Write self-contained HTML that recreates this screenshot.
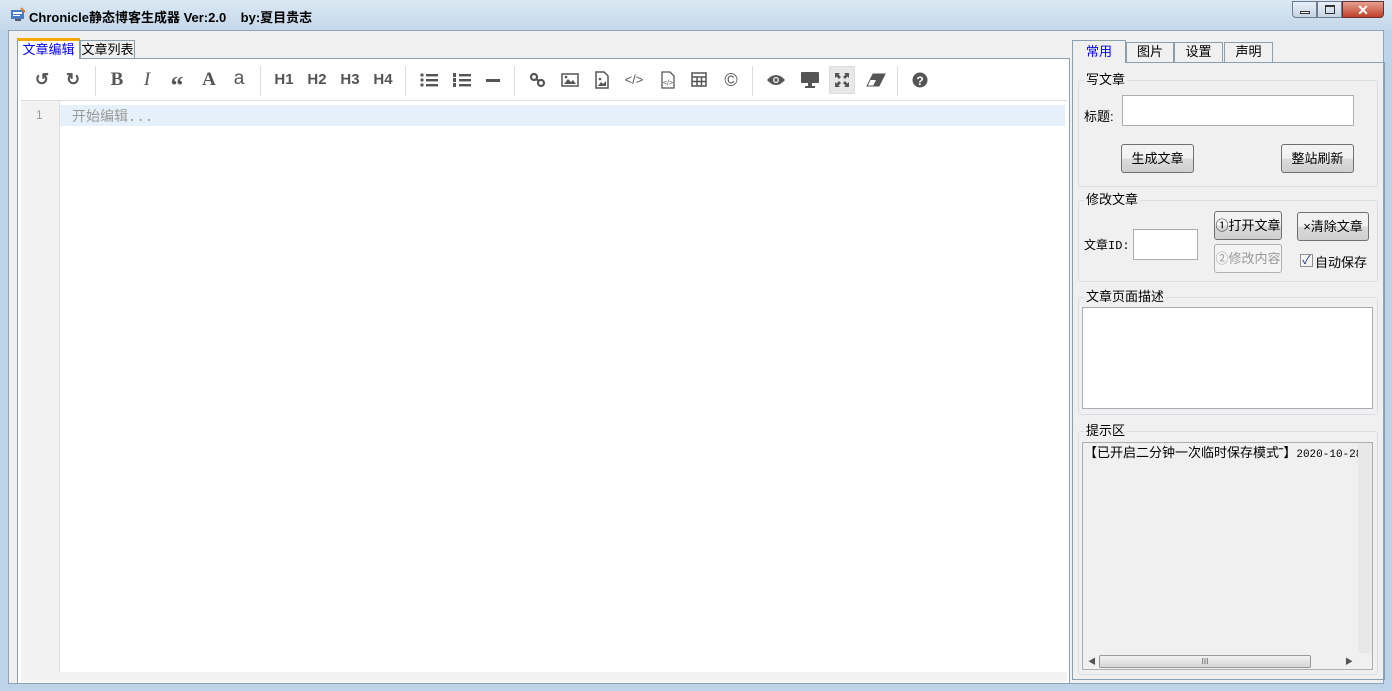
<!DOCTYPE html>
<html><head><meta charset="utf-8"><style>
*{margin:0;padding:0;box-sizing:border-box}
body{width:1392px;height:691px;overflow:hidden;background:#bcd3e8;font-family:"Liberation Sans","Noto Sans CJK SC",sans-serif;font-size:13px;position:relative;color:#000}
.abs{position:absolute}
#title{left:0;top:0;width:1392px;height:30px;background:linear-gradient(#dbe8f4,#c4d8ea)}
#client{left:8px;top:30px;width:1376px;height:654px;background:#f0f0f0;border:1px solid #8ea4bb}
.tab{position:absolute;border:1px solid #8c9fae;border-bottom:none;background:#f0f0f0;text-align:center;font-size:13px;line-height:18px}
.btn{position:absolute;border:1px solid #707070;border-radius:3px;background:linear-gradient(#f2f2f2 50%,#dcdcdc 50%,#cfcfcf);text-align:center;font-size:13px;line-height:27px}
.grp{position:absolute;border:1px solid #d5dfe5;border-radius:3px}
.lbl{position:absolute;background:#f0f0f0;padding:0 2px;font-size:13px;line-height:14px}
.inp{position:absolute;background:#fff;border:1px solid #abadb3}
.ic{position:absolute;top:71px;width:20px;height:18px;color:#555;font-weight:bold;text-align:center;font-size:17px;line-height:18px}
.sep{position:absolute;top:66px;width:1px;height:30px;background:#ddd}
</style></head><body>
<div id="title" class="abs"></div>
<svg class="abs" style="left:10px;top:7px" width="16" height="16"><rect x="1" y="3" width="13" height="9" fill="#4a7cc4"/><rect x="3" y="5" width="9" height="2" fill="#fff"/><rect x="3" y="8" width="7" height="1" fill="#fff"/><rect x="5" y="12" width="6" height="2" fill="#556"/><line x1="11" y1="1" x2="15" y2="5" stroke="#e08020" stroke-width="2"/></svg>
<div class="abs" style="left:29px;top:7px;font-weight:bold;font-size:13px">Chronicle静态博客生成器 Ver:2.0&nbsp;&nbsp;&nbsp; by:夏目贵志</div>
<div class="abs" style="left:1292px;top:1px;width:25px;height:17px;border:1px solid #6a7d92;border-radius:0 0 0 4px;background:linear-gradient(#e8eff7,#c6d4e3)"><div style="margin:9px 7px;width:10px;height:3px;border:1px solid #333;background:#fff"></div></div>
<div class="abs" style="left:1317px;top:1px;width:25px;height:17px;border:1px solid #6a7d92;background:linear-gradient(#e8eff7,#c6d4e3)"><div style="margin:3px 7px;width:10px;height:9px;border:1px solid #333;border-top-width:2px"></div></div>
<div class="abs" style="left:1342px;top:1px;width:42px;height:17px;border:1px solid #6a3030;border-radius:0 0 4px 0;background:linear-gradient(#e8a090,#c0402c);color:#fff;text-align:center;font-weight:bold;font-size:14px;line-height:16px">✕</div>
<div id="client" class="abs"></div>

<div class="tab" style="left:17px;top:38px;width:63px;height:21px;background:#fff;border-top:3px solid #f6a800;color:#00f;line-height:17px;z-index:2">文章编辑</div>
<div class="tab" style="left:80px;top:40px;width:55px;height:19px">文章列表</div>
<div class="abs" style="left:17px;top:58px;width:1053px;height:626px;border:1px solid #8c9fae;background:#fff"></div>
<div class="abs" style="left:21px;top:60px;width:1046px;height:41px;background:#fff;border-bottom:1px solid #ddd"></div>
<div class="abs" style="left:21px;top:101px;width:39px;height:572px;background:#f2f2f2;border-right:1px solid #ddd"></div>
<div class="abs" style="left:36px;top:108px;color:#999;font-size:12px">1</div>
<div class="abs" style="left:60px;top:105px;width:1005px;height:21px;background:#e6f0fb"></div>
<div class="abs" style="left:72px;top:106px;color:#999;font-size:14px;font-family:'Liberation Mono','Noto Sans CJK SC',monospace">开始编辑...</div>
<div class="abs" style="left:21px;top:672px;width:1046px;height:10px;background:#f2f2f2"></div>

<div class="ic" style="left:32px">↺</div>
<div class="ic" style="left:63px">↻</div>
<div class="sep" style="left:95px"></div>
<div class="ic" style="left:107px;font-family:'Liberation Serif',serif;font-size:19px">B</div>
<div class="ic" style="left:137px;font-family:'Liberation Serif',serif;font-style:italic;font-weight:normal;font-size:19px">I</div>
<div class="ic" style="left:167px;font-family:'Liberation Serif',serif;font-size:26px;line-height:30px">“</div>
<div class="ic" style="left:199px;font-family:'Liberation Serif',serif;font-size:19px">A</div>
<div class="ic" style="left:229px;font-weight:normal;font-size:19px;line-height:15px">a</div>
<div class="sep" style="left:260px"></div>
<div class="ic" style="left:272px;width:24px;font-size:15px">H1</div>
<div class="ic" style="left:305px;width:24px;font-size:15px">H2</div>
<div class="ic" style="left:338px;width:24px;font-size:15px">H3</div>
<div class="ic" style="left:371px;width:24px;font-size:15px">H4</div>
<div class="sep" style="left:405px"></div>
<svg class="abs" style="left:420px;top:72px" width="18" height="16" fill="#555"><circle cx="2" cy="3" r="1.6"/><circle cx="2" cy="8" r="1.6"/><circle cx="2" cy="13" r="1.6"/><rect x="6" y="2" width="12" height="2.4"/><rect x="6" y="7" width="12" height="2.4"/><rect x="6" y="12" width="12" height="2.4"/></svg>
<svg class="abs" style="left:453px;top:72px" width="18" height="16" fill="#555"><rect x="0" y="1" width="3" height="4"/><rect x="0" y="6" width="3" height="4"/><rect x="0" y="11" width="3" height="4"/><rect x="6" y="2" width="12" height="2.4"/><rect x="6" y="7" width="12" height="2.4"/><rect x="6" y="12" width="12" height="2.4"/></svg>
<div class="abs" style="left:486px;top:79px;width:14px;height:3px;background:#555"></div>
<div class="sep" style="left:514px"></div>
<svg class="abs" style="left:529px;top:72px" width="17" height="16" fill="none" stroke="#555" stroke-width="2.2"><circle cx="5" cy="5" r="3"/><circle cx="12" cy="11" r="3"/><line x1="7" y1="7" x2="10" y2="9"/></svg>
<svg class="abs" style="left:561px;top:72px" width="18" height="16"><rect x="1" y="2" width="16" height="12" fill="none" stroke="#555" stroke-width="1.5"/><path d="M3 12 L7 7 L10 10 L12 8 L15 12Z" fill="#555"/><circle cx="5" cy="5" r="1.3" fill="#555"/></svg>
<svg class="abs" style="left:594px;top:71px" width="16" height="18"><path d="M2 1H10L14 5V17H2Z" fill="none" stroke="#555" stroke-width="1.5"/><path d="M4 15L7 11L9 13L12 10V15Z" fill="#555"/><circle cx="6" cy="8" r="1.3" fill="#555"/></svg>
<div class="ic" style="left:624px;font-weight:normal;font-size:13px">&lt;/&gt;</div>
<svg class="abs" style="left:660px;top:71px" width="16" height="18"><path d="M2 1H10L14 5V17H2Z" fill="none" stroke="#555" stroke-width="1.3"/><text x="8" y="14" font-size="7" text-anchor="middle" fill="#555" font-family="Liberation Sans">&lt;/&gt;</text></svg>
<svg class="abs" style="left:691px;top:72px" width="16" height="15" fill="none" stroke="#555" stroke-width="1.5"><rect x="1" y="1" width="14" height="13"/><line x1="1" y1="5" x2="15" y2="5"/><line x1="1" y1="9.5" x2="15" y2="9.5"/><line x1="6" y1="5" x2="6" y2="14"/><line x1="10.5" y1="5" x2="10.5" y2="14"/></svg>
<div class="ic" style="left:721px;font-weight:normal;font-size:18px">©</div>
<div class="sep" style="left:752px"></div>
<svg class="abs" style="left:766px;top:73px" width="20" height="14"><path d="M1 7Q10 -3 19 7Q10 17 1 7Z" fill="#555"/><circle cx="10" cy="7" r="3" fill="#fff"/><circle cx="10" cy="7" r="1.8" fill="#555"/></svg>
<svg class="abs" style="left:800px;top:71px" width="20" height="17" fill="#555"><rect x="1" y="1" width="18" height="11" rx="1"/><rect x="8" y="12" width="4" height="3"/><rect x="5" y="15" width="10" height="2"/></svg>
<div class="abs" style="left:829px;top:66px;width:26px;height:28px;background:#e8e8e8;border:1px solid #ddd"></div>
<svg class="abs" style="left:834px;top:72px" width="16" height="16" fill="#555"><path d="M1 1H6L4.5 2.5 7 5 5 7 2.5 4.5 1 6Z M15 1V6L13.5 4.5 11 7 9 5 11.5 2.5 10 1Z M1 15V10L2.5 11.5 5 9 7 11 4.5 13.5 6 15Z M15 15H10L11.5 13.5 9 11 11 9 13.5 11.5 15 10Z"/></svg>
<svg class="abs" style="left:866px;top:73px" width="20" height="14"><path d="M7 1H19L13 13H1Z" fill="#555"/><path d="M4 7H10L7 13H1Z" fill="#fff"/><path d="M7 1H19L13 13H1Z" fill="none" stroke="#555"/></svg>
<div class="sep" style="left:897px"></div>
<svg class="abs" style="left:912px;top:72px" width="16" height="16"><circle cx="8" cy="8" r="7.5" fill="#555"/><text x="8" y="13" font-size="12" font-weight="bold" text-anchor="middle" fill="#fff" font-family="Liberation Sans">?</text></svg>

<div class="tab" style="left:1072px;top:40px;width:54px;height:23px;background:#f0f0f0;color:#00f;line-height:22px;z-index:2">常用</div>
<div class="tab" style="left:1126px;top:42px;width:48px;height:20px">图片</div>
<div class="tab" style="left:1174px;top:42px;width:49px;height:20px">设置</div>
<div class="tab" style="left:1224px;top:42px;width:49px;height:20px">声明</div>
<div class="abs" style="left:1072px;top:62px;width:313px;height:618px;border:1px solid #8c9fae"></div>

<div class="grp" style="left:1078px;top:80px;width:300px;height:107px"></div>
<div class="lbl" style="left:1084px;top:73px">写文章</div>
<div class="abs" style="left:1084px;top:106px">标题:</div>
<div class="inp" style="left:1122px;top:95px;width:232px;height:31px"></div>
<div class="btn" style="left:1121px;top:144px;width:73px;height:29px">生成文章</div>
<div class="btn" style="left:1281px;top:144px;width:73px;height:29px">整站刷新</div>

<div class="grp" style="left:1078px;top:200px;width:300px;height:82px"></div>
<div class="lbl" style="left:1084px;top:193px">修改文章</div>
<div class="abs" style="left:1084px;top:236px;font-family:'Liberation Mono','Noto Sans CJK SC',monospace;font-size:12px">文章ID:</div>
<div class="inp" style="left:1133px;top:229px;width:65px;height:31px"></div>
<div class="btn" style="left:1214px;top:211px;width:68px;height:29px">①打开文章</div>
<div class="btn" style="left:1297px;top:212px;width:72px;height:29px">×清除文章</div>
<div class="abs" style="left:1214px;top:244px;width:68px;height:29px;border:1px solid #adb2b5;border-radius:3px;background:#f4f4f4;color:#999;text-align:center;line-height:27px">②修改内容</div>
<div class="abs" style="left:1300px;top:254px;width:13px;height:13px;border:1px solid #8f8f8f;background:#f4f4f4;color:#22337a;font-size:12px;line-height:11px;text-align:center">✓</div>
<div class="abs" style="left:1315px;top:252px">自动保存</div>

<div class="grp" style="left:1078px;top:297px;width:300px;height:118px"></div>
<div class="lbl" style="left:1084px;top:290px">文章页面描述</div>
<div class="inp" style="left:1082px;top:307px;width:291px;height:102px"></div>

<div class="grp" style="left:1078px;top:431px;width:300px;height:244px"></div>
<div class="lbl" style="left:1084px;top:424px">提示区</div>
<div class="abs" style="left:1082px;top:442px;width:291px;height:228px;border:1px solid #abadb3;background:#f0f0f0"></div>
<div class="abs" style="left:1084px;top:442px;width:275px;overflow:hidden;white-space:nowrap;font-size:13px">【已开启二分钟一次临时保存模式˜】<span style="font-family:'Liberation Mono',monospace;font-size:11px">2020-10-28 09:00</span></div>
<div class="abs" style="left:1358px;top:443px;width:14px;height:210px;background:#e8e8e8"></div>
<div class="abs" style="left:1083px;top:654px;width:275px;height:15px;background:#f0f0f0"></div>
<div class="abs" style="left:1099px;top:655px;width:212px;height:13px;border:1px solid #999;border-radius:2px;background:linear-gradient(#f2f2f2,#d6d6d6);text-align:center;font-size:8px;line-height:11px;color:#555">III</div>
<div class="abs" style="left:1088px;top:656px;font-size:8px;color:#555">◀</div>
<div class="abs" style="left:1345px;top:656px;font-size:8px;color:#555">▶</div>
</body></html>
